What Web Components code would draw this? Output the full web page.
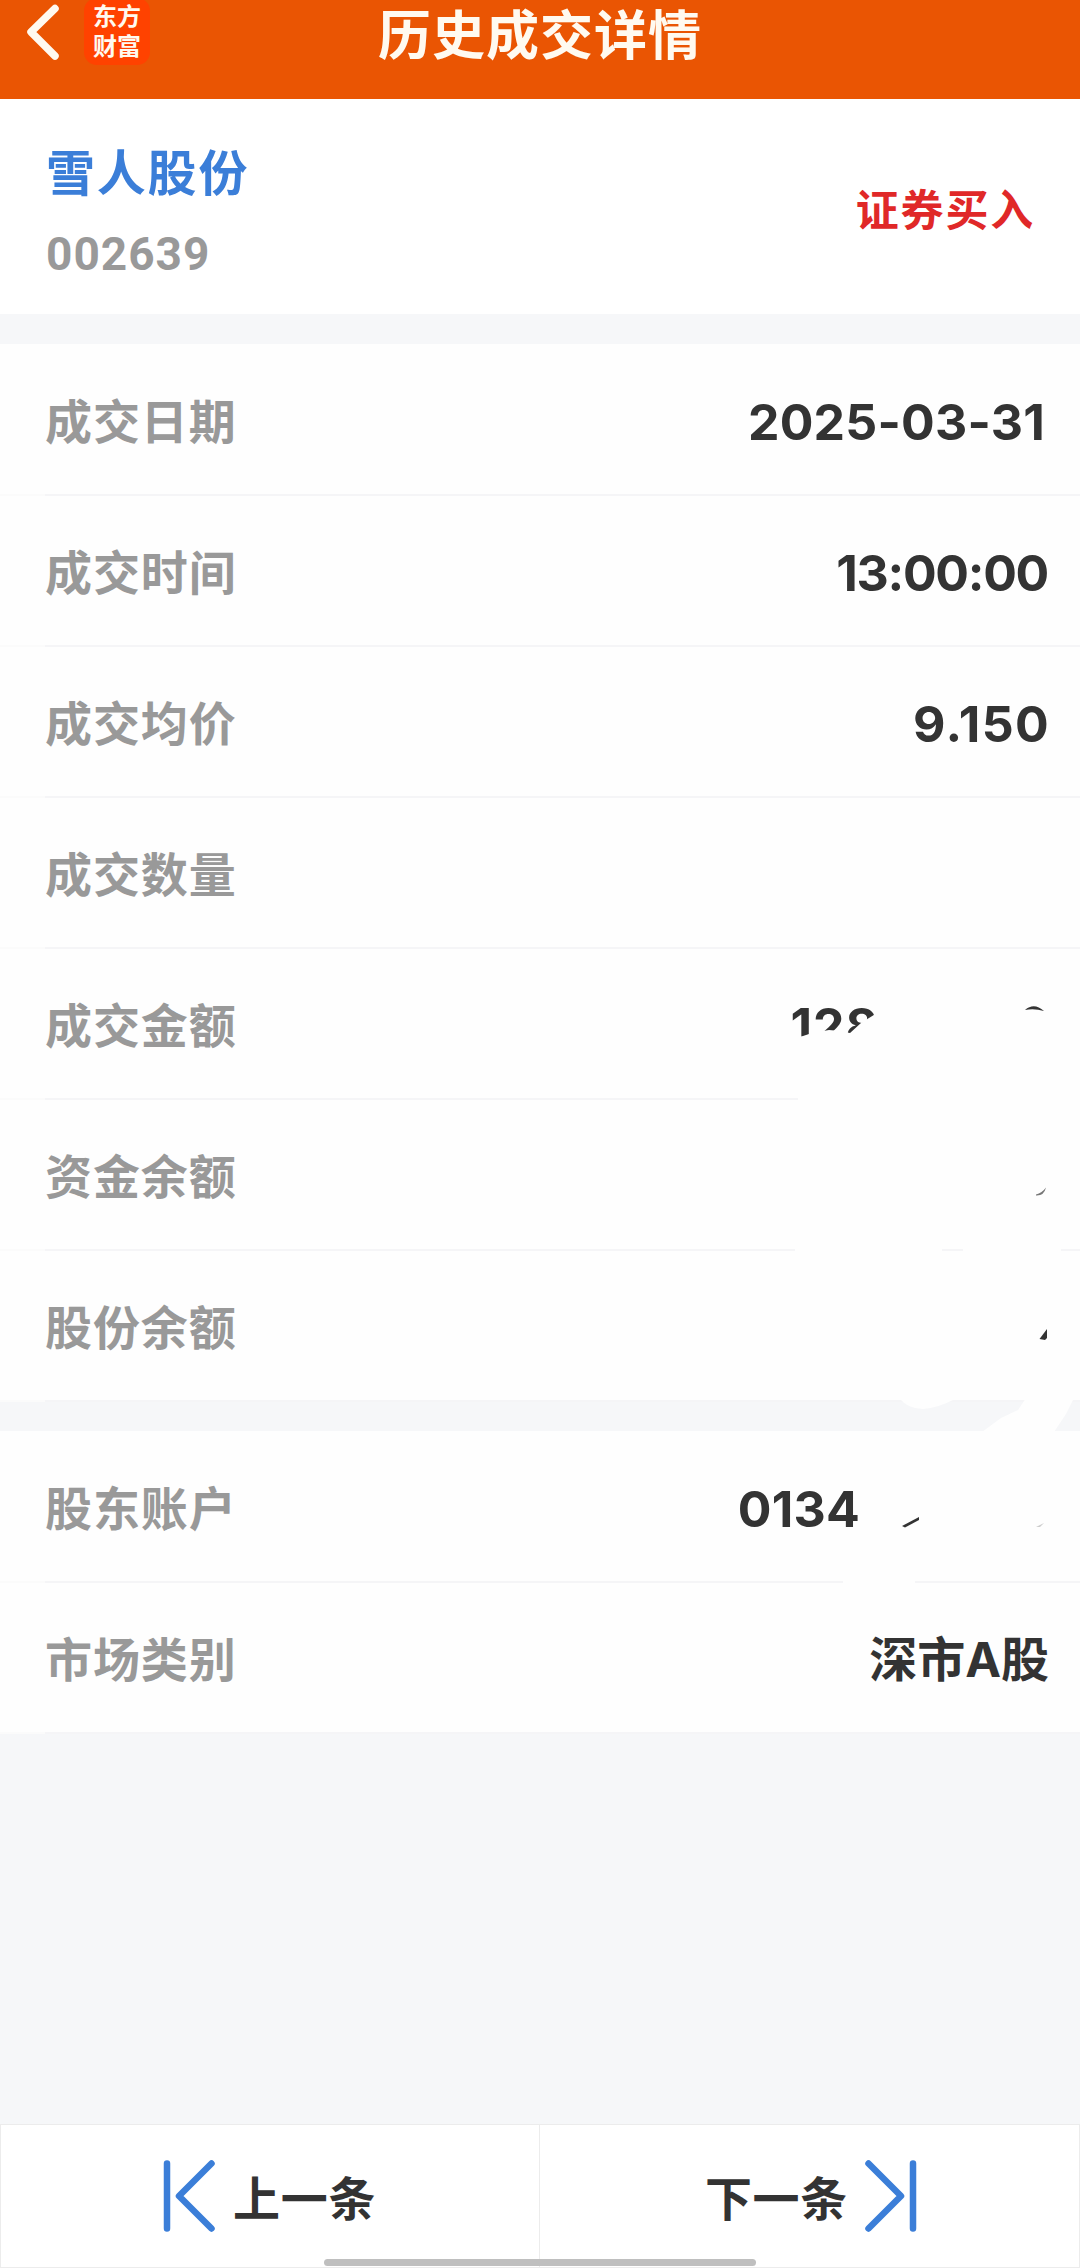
<!DOCTYPE html>
<html lang="zh-CN">
<head>
<meta charset="UTF-8">
<title>历史成交详情</title>
<style>
  body {
    margin: 0;
    background: #f6f7f9;
    color: #333;
    font-family: Inter, "Noto Sans CJK SC", sans-serif;
    font-weight: 700;
  }
</style>
</head>
<body>
<trade-page>
  <app-header slot="header">历史成交详情</app-header>
  <stock-summary name="雪人股份" code="002639">证券买入</stock-summary>
  <info-group>
    <info-row label="成交日期" style="--inset: 35px; --spacing: 0.200px">2025-03-31</info-row>
    <info-row label="成交时间" style="--inset: 32px; --spacing: -1.300px">13:00:00</info-row>
    <info-row label="成交均价" style="--inset: 30px; --spacing: 1.300px">9.150</info-row>
    <info-row label="成交数量"></info-row>
    <info-row label="成交金额" style="--inset: 201px; --spacing: 1px">128</info-row>
    <info-row label="资金余额"></info-row>
    <info-row label="股份余额"></info-row>
  </info-group>
  <info-group>
    <info-row label="股东账户" style="--inset: 220px; --spacing: 0.200px">0134</info-row>
    <info-row label="市场类别" style="--size: 48px">深市A股</info-row>
  </info-group>
  <redact-layer slot="overlay"></redact-layer>
  <pager-bar slot="footer"></pager-bar>
</trade-page>

<script>
class TradePage extends HTMLElement {
  constructor() {
    super();
    this.attachShadow({ mode: 'open' });
  }

  connectedCallback() {
    this.shadowRoot.innerHTML = `
      <style>
        :host {
          display: flex;
          flex-direction: column;
          position: relative;
          width: 1080px;
          height: 2268px;
          overflow: hidden;
        }
        main {
          display: flex;
          flex-direction: column;
          gap: 30px;
          flex: 1;
        }
      </style>
      <slot name="header"></slot>
      <main><slot></slot></main>
      <slot name="footer"></slot>
      <slot name="overlay"></slot>
    `;
  }
}

class AppHeader extends HTMLElement {
  constructor() {
    super();
    this.attachShadow({ mode: 'open' });
  }

  connectedCallback() {
    this.shadowRoot.innerHTML = `
      <style>
        :host {
          display: grid;
          grid-template-columns: 1fr auto 1fr;
          height: 99px;
          flex-shrink: 0;
          background: #ea5503;
          color: #fffaf0;
        }
        .left {
          display: flex;
          align-items: flex-start;
        }
        .back {
          margin-left: 24px;
          width: 60px;
          height: 66px;
        }
        .logo {
          box-sizing: border-box;
          width: 66px;
          height: 67px;
          margin-top: -2px;
          padding-top: 4px;
          border-radius: 13px;
          background: #ff4200;
          font-size: 24px;
          line-height: 30px;
          text-align: center;
        }
        h1 {
          margin: 0;
          font-size: 53px;
          line-height: 73px;
          letter-spacing: 1px;
          white-space: nowrap;
        }
      </style>
      <div class="left">
        <svg class="back" viewBox="0 0 60 66" fill="none" stroke="#fffaf0" stroke-width="7.500" stroke-linecap="round" stroke-linejoin="round">
          <path d="M31 8.500L7 32L31 56"/>
        </svg>
        <div class="logo">东方<br>财富</div>
      </div>
      <h1><slot></slot></h1>
    `;
  }
}

class StockSummary extends HTMLElement {
  constructor() {
    super();
    this.attachShadow({ mode: 'open' });
  }

  connectedCallback() {
    this.shadowRoot.innerHTML = `
      <style>
        :host {
          display: flex;
          justify-content: space-between;
          box-sizing: border-box;
          height: 215px;
          padding: 38px 45px 0 46px;
          background: #fff;
        }
        .name {
          color: #3b7ed8;
          font-size: 49px;
          line-height: 74px;
          letter-spacing: 1.800px;
        }
        .code {
          margin-top: 5px;
          color: #999;
          font-family: Roboto, sans-serif;
          font-size: 46px;
          line-height: 76px;
          letter-spacing: 1px;
        }
        .side {
          color: #e02828;
          font-size: 43px;
          line-height: 146px;
          letter-spacing: 1.800px;
        }
      </style>
      <div>
        <div class="name">${this.getAttribute('name')}</div>
        <div class="code">${this.getAttribute('code')}</div>
      </div>
      <div class="side"><slot></slot></div>
    `;
  }
}

class InfoGroup extends HTMLElement {
  constructor() {
    super();
    this.attachShadow({ mode: 'open' });
    this.shadowRoot.innerHTML = `
      <style>
        :host {
          display: block;
          background: #fefefe;
        }
      </style>
      <slot></slot>
    `;
  }
}

class InfoRow extends HTMLElement {
  constructor() {
    super();
    this.attachShadow({ mode: 'open' });
  }

  connectedCallback() {
    this.shadowRoot.innerHTML = `
      <style>
        :host {
          display: flex;
          flex-direction: column;
          height: 151px;
        }
        .content {
          display: flex;
          flex: 1;
          align-items: center;
          justify-content: space-between;
          padding: 5px var(--inset, 31px) 0 45px;
        }
        .label {
          color: #999;
          font-size: 47px;
          line-height: 60px;
          letter-spacing: 0.900px;
        }
        .value {
          font-size: var(--size, 50px);
          line-height: 60px;
          letter-spacing: var(--spacing, 0);
        }
        .line {
          height: 2px;
          margin-bottom: -1px;
          background: linear-gradient(to right, #fbfbfb 45px, #f5f5f7 45px);
        }
      </style>
      <div class="content">
        <span class="label">${this.getAttribute('label')}</span>
        <span class="value"><slot></slot></span>
      </div>
      <div class="line"></div>
    `;
  }
}

// White brush strokes that hide private values, plus what still shows between them
class RedactLayer extends HTMLElement {
  constructor() {
    super();
    this.attachShadow({ mode: 'open' });
    this.shadowRoot.innerHTML = `
      <style>
        :host {
          display: block;
          position: absolute;
          top: 980px;
          left: 780px;
          width: 300px;
          height: 620px;
          pointer-events: none;
        }
        svg {
          display: block;
        }
      </style>
      <svg width="300" height="620" viewBox="780 980 300 620">
        <g fill="#fefefe">
          <path d="M785 1040L803 1036L812 1033L829 1030L840 1031L850 1033L861 1023L877 1013L886 1012V1060H785Z"/>
          <path d="M798 1090H1080V1110H798Z"/>
          <path d="M795 1244H942V1256H795ZM963 1244H1061V1256H963Z"/>
          <path d="M899 1398Q908 1409 923 1409Q938 1408 955 1399V1396H899Z"/>
          <path d="M1026 1398L1018 1410L1001 1418L982 1432H1054L1066 1414L1074 1398Z"/>
          <path d="M843 1576H915V1585H843Z"/>
        </g>
        <g fill="#333">
          <path d="M1025 1010Q1034 1002 1044 1011Q1034 1008 1025 1010Z"/>
          <path d="M1036 1194.500Q1042 1193 1046 1187.500Q1044 1196 1036 1195.500Z" fill="#777"/>
          <path d="M1039.500 1339L1047 1329V1338L1045 1340Z"/>
          <path d="M902 1526L919 1517V1520L905 1527.500Z"/>
          <path d="M1036 1527L1044 1523L1040 1527Z" fill="#ccc"/>
        </g>
      </svg>
    `;
  }
}

class PagerBar extends HTMLElement {
  constructor() {
    super();
    this.attachShadow({ mode: 'open' });
    this.shadowRoot.innerHTML = `
      <style>
        :host {
          display: grid;
          grid-template-columns: 1fr 1fr;
          position: relative;
          box-sizing: border-box;
          height: 144px;
          flex-shrink: 0;
          border: 1px solid #ececec;
          background: #fff;
          font-size: 47px;
          letter-spacing: 0.700px;
        }
        .item {
          display: flex;
          align-items: center;
          height: 142px;
        }
        span {
          margin-top: -2px;
        }
        .prev {
          gap: 18px;
          padding-left: 162px;
          border-right: 1px solid #ececec;
        }
        .next {
          gap: 17px;
          justify-content: flex-end;
          padding-right: 162px;
        }
        svg {
          width: 52px;
          height: 74px;
          fill: none;
          stroke: #3b7ed8;
          stroke-width: 6.500;
          stroke-linecap: round;
          stroke-linejoin: round;
        }
        .next svg {
          transform: scaleX(-1);
        }
        .home {
          position: absolute;
          left: 323px;
          bottom: 1px;
          width: 432px;
          height: 7px;
          border-radius: 4px;
          background: #bfbfbf;
        }
      </style>
      <div class="item prev">
        <svg viewBox="0 0 52 74"><path d="M4 4.500V69.500M48.500 4.500L16 37L48.500 69.500"/></svg>
        <span>上一条</span>
      </div>
      <div class="item next">
        <span>下一条</span>
        <svg viewBox="0 0 52 74"><path d="M4 4.500V69.500M48.500 4.500L16 37L48.500 69.500"/></svg>
      </div>
      <div class="home"></div>
    `;
  }
}

customElements.define('trade-page', TradePage);
customElements.define('app-header', AppHeader);
customElements.define('stock-summary', StockSummary);
customElements.define('info-group', InfoGroup);
customElements.define('info-row', InfoRow);
customElements.define('redact-layer', RedactLayer);
customElements.define('pager-bar', PagerBar);
</script>
</body>
</html>
